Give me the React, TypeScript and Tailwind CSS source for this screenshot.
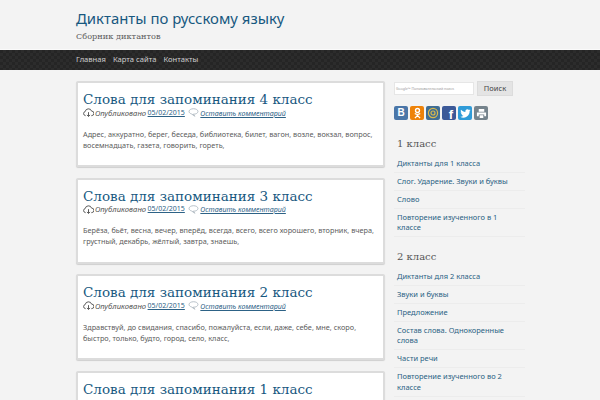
import React from 'react';

const posts = [
  {
    title: 'Слова для запоминания 4 класс',
    text: 'Адрес, аккуратно, берег, беседа, библиотека, билет, вагон, возле, вокзал, вопрос, восемнадцать, газета, говорить, гореть,',
  },
  {
    title: 'Слова для запоминания 3 класс',
    text: 'Берёза, бьёт, весна, вечер, вперёд, всегда, всего, всего хорошего, вторник, вчера, грустный, декабрь, жёлтый, завтра, знаешь,',
  },
  {
    title: 'Слова для запоминания 2 класс',
    text: 'Здравствуй, до свидания, спасибо, пожалуйста, если, даже, себе, мне, скоро, быстро, только, будто, город, село, класс,',
  },
  { title: 'Слова для запоминания 1 класс', text: '' },
];

const grade1 = ['Диктанты для 1 класса', 'Слог. Ударение. Звуки и буквы', 'Слово', 'Повторение изученного в 1 классе'];
const grade2 = [
  'Диктанты для 2 класса',
  'Звуки и буквы',
  'Предложение',
  'Состав слова. Однокоренные слова',
  'Части речи',
  'Повторение изученного во 2 классе',
];

const CloudIcon = () => (
  <svg className="w-[11px] h-[11px] shrink-0" viewBox="0 0 16 16" fill="none" stroke="#555" strokeWidth={1.4}>
    <path d="M4 12.500H3.500a3 3 0 0 1-.3-5.900 4.800 4.800 0 0 1 9.300-.6 3.200 3.200 0 0 1 .3 6.500H12" />
    <path d="M8 7.500v6M5.800 11.500 8 13.800l2.200-2.300" />
  </svg>
);

const BubbleIcon = () => (
  <svg className="w-[11px] h-[11px] shrink-0" viewBox="0 0 16 16" fill="none" stroke="#a9b4bc" strokeWidth={1.2}>
    <path d="M8 2.500c3.600 0 6.500 1.700 6.500 4s-2.900 4-6.500 4l-.8 0 3 3-5-3.300c-2-.6-3.700-2-3.700-3.700 0-2.300 2.900-4 6.500-4z" strokeLinejoin="round" />
  </svg>
);

const Social = ({ bg, children }: { bg: string; children: React.ReactNode }) => (
  <div className={`w-[14px] h-[14px] rounded-[2px] flex items-center justify-center overflow-hidden ${bg}`}>
    {children}
  </div>
);

const Post = ({ title, text }: { title: string; text: string }) => (
  <article className="bg-white rounded-[2px] border-2 border-[#dcdcdc] px-[5px] pt-[7px] h-[86px] shrink-0 shadow-[0_1px_1px_rgba(0,0,0,0.15)]">
    <h2 className="font-['DejaVu_Serif',serif] text-[13.5px] leading-[18px] text-[#17587f] whitespace-nowrap">{title}</h2>
    {text && (
      <>
        <div className="flex items-center font-['Noto_Sans',sans-serif] text-[7.7px] leading-[10px] italic text-[#555] whitespace-nowrap mt-[-1px]">
          <CloudIcon />
          <span className="ml-[1px]">Опубликовано</span>
          <span className="ml-[1.5px] not-italic underline text-[#2d6286] text-[7px]">05/02/2015</span>
          <span className="ml-[3.5px]">
            <BubbleIcon />
          </span>
          <span className="ml-[1px] underline text-[#2d6286] text-[7.1px]">Оставить комментарий</span>
        </div>
        <p className="font-['Noto_Sans',sans-serif] text-[7.3px] leading-[11px] text-[#5c5c5c] mt-[10.5px]">{text}</p>
      </>
    )}
  </article>
);

const LinkList = ({ items }: { items: string[] }) => (
  <ul className="font-['Noto_Sans',sans-serif] text-[7.5px] leading-[10.5px] text-[#2a6283]">
    {items.map((item) => (
      <li key={item} className="py-[3.25px] px-[3px] border-b border-[#ececec]">
        {item}
      </li>
    ))}
  </ul>
);

export default function App() {
  return (
    <div className="w-[600px] h-[400px] overflow-hidden bg-[#f3f3f3]">
      <header className="h-[49px] pl-[76px] pt-[8px]">
        <h1 className="font-['Noto_Sans',sans-serif] text-[14.9px] leading-[21px] text-[#17587f]">
          Диктанты по русскому языку
        </h1>
        <p className="font-['DejaVu_Serif',serif] text-[8.2px] leading-[13px] font-normal text-[#5c5c5c] mt-[1px]">
          Сборник диктантов
        </p>
      </header>
      <nav className="h-[21px] border-t border-[#fafafa] bg-[#272727] bg-[repeating-conic-gradient(#2c2c2c_0_25%,#252525_0_50%)] bg-[length:6px_6px] pl-[76px] flex items-center gap-[7px] font-['Noto_Sans',sans-serif] text-[7.6px] text-[#cfcfcf]">
        <span>Главная</span>
        <span>Карта сайта</span>
        <span>Контакты</span>
      </nav>
      <div className="flex pl-[76px] pt-[11px] gap-[9px]">
        <main className="w-[309px] flex flex-col gap-[10.67px] shrink-0">
          {posts.map((p) => (
            <Post key={p.title} title={p.title} text={p.text} />
          ))}
        </main>
        <aside className="w-[131px] shrink-0">
          <div className="flex items-center gap-[3px]">
            <div className="w-[80px] h-[13px] bg-white border border-[#e6e6e6] flex items-center pl-[1px] font-['Noto_Sans',sans-serif] text-[3.5px] text-[#999] whitespace-nowrap overflow-hidden">
              Google™ Пользовательский поиск
            </div>
            <div className="w-[36px] h-[15px] bg-[#e4e4e4] border border-[#dcdcdc] flex items-center justify-center font-['Noto_Sans',sans-serif] text-[7.5px] text-[#444]">
              Поиск
            </div>
          </div>
          <div className="flex gap-[2px] mt-[10px]">
            <Social bg="bg-[#4a76a8]">
              <span className="font-['Liberation_Sans',sans-serif] font-bold text-[10px] leading-none text-white">В</span>
            </Social>
            <Social bg="bg-[#ee8208]">
              <svg className="w-[11px] h-[12px]" viewBox="0 0 12 14" fill="none" stroke="#fff" strokeWidth={1.6}>
                <circle cx="6" cy="4" r="2.300" />
                <path d="M2.800 7.600c2 1.300 4.400 1.300 6.400 0M6 8.800v1M3 13l3-3.200L9 13" />
              </svg>
            </Social>
            <Social bg="bg-[#3f6d94]">
              <svg className="w-[12px] h-[12px]" viewBox="0 0 12 12" fill="none" stroke="#d8b94c" strokeWidth={1.2}>
                <circle cx="6" cy="6" r="4.600" />
                <circle cx="6" cy="6" r="2" />
              </svg>
            </Social>
            <Social bg="bg-[#3b5998]">
              <span className="font-['Liberation_Sans',sans-serif] font-bold text-[13px] leading-none text-white translate-x-[2px] translate-y-[1px]">f</span>
            </Social>
            <Social bg="bg-[#2f9bd8]">
              <svg className="w-[11px] h-[11px]" viewBox="0 0 24 24" fill="#fff">
                <path d="M23 5c-.8.400-1.700.600-2.600.700.900-.6 1.600-1.400 2-2.500-.9.500-1.900.900-2.900 1.100A4.600 4.600 0 0 0 11.700 8.500C7.900 8.300 4.500 6.500 2.200 3.700c-1.200 2.100-.6 4.800 1.400 6.100-.7 0-1.400-.2-2.100-.6 0 2.200 1.600 4.200 3.700 4.600-.7.200-1.400.2-2.100.1.600 1.900 2.300 3.200 4.300 3.200A9.300 9.300 0 0 1 .6 19c2.100 1.300 4.500 2.100 7.100 2.100 8.600 0 13.500-7.300 13.200-13.800.9-.6 1.700-1.400 2.100-2.300z" />
              </svg>
            </Social>
            <Social bg="bg-[#75838c]">
              <svg className="w-[11px] h-[11px]" viewBox="0 0 12 12" fill="#fff">
                <path d="M3 1h6v3H3zM1 5h10v4H9V7H3v2H1zM4 8h4v3H4z" />
              </svg>
            </Social>
          </div>
          <h3 className="font-['DejaVu_Serif',serif] text-[10px] leading-[16px] text-[#555] mt-[16px] mb-[2.5px] pl-[3px]">1 класс</h3>
          <LinkList items={grade1} />
          <h3 className="font-['DejaVu_Serif',serif] text-[10px] leading-[16px] text-[#555] mt-[11.5px] mb-[3px] pl-[3px]">2 класс</h3>
          <LinkList items={grade2} />
        </aside>
      </div>
    </div>
  );
}
